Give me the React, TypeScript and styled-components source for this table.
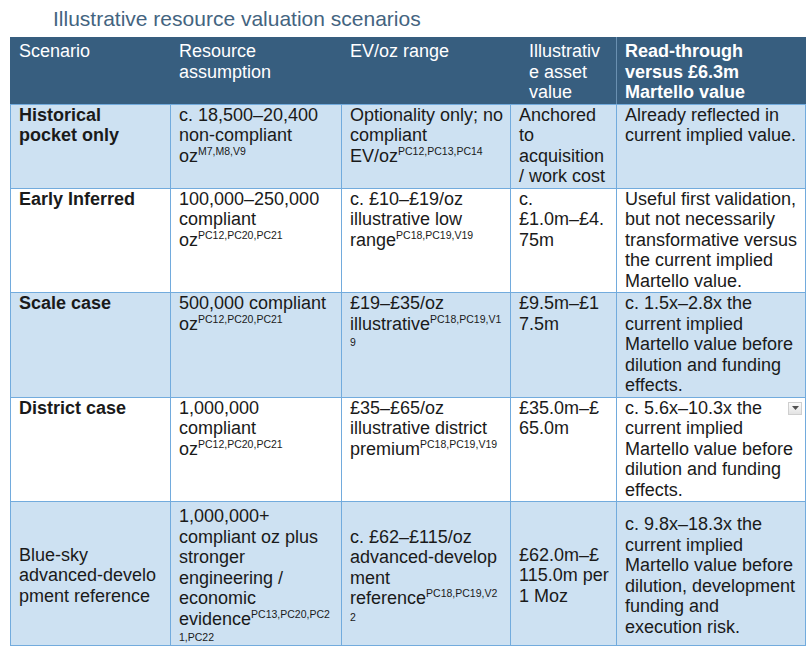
import React from "react";
import styled, { createGlobalStyle } from "styled-components";

type Piece = string | [string, string] | { sup: string };

type CellData = {
  lines: Piece[];
  bold?: boolean;
  menu?: boolean;
};

type RowData = {
  shaded?: boolean;
  middle?: boolean;
  cells: CellData[];
};

const GlobalStyle = createGlobalStyle`
  html, body {
    margin: 0;
    padding: 0;
    background: #ffffff;
  }
  body {
    font-family: "Liberation Sans", Arial, sans-serif;
  }
`;

const Page = styled.div`
  width: 810px;
  height: 647px;
  box-sizing: border-box;
  padding: 7px 0 0 10px;
  overflow: hidden;
`;

const Title = styled.h1`
  margin: 0 0 6px 43px;
  font-size: 21px;
  font-weight: 400;
  line-height: 24px;
  color: #44647f;
`;

const Table = styled.table`
  width: 795px;
  table-layout: fixed;
  border-collapse: collapse;
  font-size: 18px;
  line-height: 20.5px;
  color: #1a1a1a;
`;

const HeadCell = styled.th<{ $bold?: boolean; $indent?: boolean; $divided?: boolean }>`
  padding: 3px 8px 1px ${({ $indent }) => ($indent ? "18px" : "8px")};
  background: #375e7f;
  border: 1px solid #375e7f;
  border-bottom-color: #72abdd;
  border-right-color: ${({ $divided }) => ($divided ? "#6a90b1" : "#375e7f")};
  color: #ffffff;
  text-align: left;
  vertical-align: top;
  font-weight: ${({ $bold }) => ($bold ? 700 : 400)};
`;

const Row = styled.tr<{ $shaded?: boolean; $middle?: boolean }>`
  background: ${({ $shaded }) => ($shaded ? "#cde1f2" : "#ffffff")};
  vertical-align: ${({ $middle }) => ($middle ? "middle" : "top")};

  & > td {
    padding-top: ${({ $middle }) => ($middle ? "4px" : "0")};
    padding-bottom: ${({ $middle }) => ($middle ? "0" : "1px")};
  }
`;

const Cell = styled.td<{ $bold?: boolean }>`
  position: relative;
  padding: 0 8px 1px;
  border: 1px solid #72abdd;
  font-weight: ${({ $bold }) => ($bold ? 700 : 400)};
`;

const Line = styled.span`
  display: block;
  white-space: nowrap;
`;

const Sup = styled.sup`
  font-size: 10.5px;
  line-height: 0;
  vertical-align: super;
  font-weight: 400;
`;

const SupLine = styled.span`
  display: block;
  white-space: nowrap;
  font-size: 10.5px;
  line-height: 16px;
`;

const DropButton = styled.span`
  position: absolute;
  top: 4px;
  right: 3px;
  width: 14px;
  height: 13px;
  box-sizing: border-box;
  display: flex;
  align-items: center;
  justify-content: center;
  border: 1px solid #cfcfcf;
  background: linear-gradient(#fbfbfb, #e3e3e3);
`;

const header: CellData[] = [
  { lines: ["Scenario"] },
  { lines: ["Resource", "assumption"] },
  { lines: ["EV/oz range"] },
  { lines: ["Illustrativ", "e asset", "value"] },
  { lines: ["Read-through", "versus £6.3m", "Martello value"], bold: true },
];

const rows: RowData[] = [
  {
    shaded: true,
    cells: [
      { lines: ["Historical", "pocket only"], bold: true },
      { lines: ["c. 18,500–20,400", "non-compliant", ["oz", "M7,M8,V9"]] },
      { lines: ["Optionality only; no", "compliant", ["EV/oz", "PC12,PC13,PC14"]] },
      { lines: ["Anchored", "to", "acquisition", "/ work cost"] },
      { lines: ["Already reflected in", "current implied value."] },
    ],
  },
  {
    cells: [
      { lines: ["Early Inferred"], bold: true },
      { lines: ["100,000–250,000", "compliant", ["oz", "PC12,PC20,PC21"]] },
      { lines: ["c. £10–£19/oz", "illustrative low", ["range", "PC18,PC19,V19"]] },
      { lines: ["c.", "£1.0m–£4.", "75m"] },
      {
        lines: [
          "Useful first validation,",
          "but not necessarily",
          "transformative versus",
          "the current implied",
          "Martello value.",
        ],
      },
    ],
  },
  {
    shaded: true,
    cells: [
      { lines: ["Scale case"], bold: true },
      { lines: ["500,000 compliant", ["oz", "PC12,PC20,PC21"]] },
      { lines: ["£19–£35/oz", ["illustrative", "PC18,PC19,V1"], { sup: "9" }] },
      { lines: ["£9.5m–£1", "7.5m"] },
      {
        lines: [
          "c. 1.5x–2.8x the",
          "current implied",
          "Martello value before",
          "dilution and funding",
          "effects.",
        ],
      },
    ],
  },
  {
    cells: [
      { lines: ["District case"], bold: true },
      { lines: ["1,000,000", "compliant", ["oz", "PC12,PC20,PC21"]] },
      { lines: ["£35–£65/oz", "illustrative district", ["premium", "PC18,PC19,V19"]] },
      { lines: ["£35.0m–£", "65.0m"] },
      {
        lines: [
          "c. 5.6x–10.3x the",
          "current implied",
          "Martello value before",
          "dilution and funding",
          "effects.",
        ],
        menu: true,
      },
    ],
  },
  {
    shaded: true,
    middle: true,
    cells: [
      { lines: ["Blue-sky", "advanced-develo", "pment reference"] },
      {
        lines: [
          "1,000,000+",
          "compliant oz plus",
          "stronger",
          "engineering /",
          "economic",
          ["evidence", "PC13,PC20,PC2"],
          { sup: "1,PC22" },
        ],
      },
      {
        lines: [
          "c. £62–£115/oz",
          "advanced-develop",
          "ment",
          ["reference", "PC18,PC19,V2"],
          { sup: "2" },
        ],
      },
      { lines: ["£62.0m–£", "115.0m per", "1 Moz"] },
      {
        lines: [
          "c. 9.8x–18.3x the",
          "current implied",
          "Martello value before",
          "dilution, development",
          "funding and",
          "execution risk.",
        ],
      },
    ],
  },
];

const renderLines = (lines: Piece[]) =>
  lines.map((p, i) => {
    if (typeof p === "string") return <Line key={i}>{p}</Line>;
    if (Array.isArray(p))
      return (
        <Line key={i}>
          {p[0]}
          <Sup>{p[1]}</Sup>
        </Line>
      );
    return <SupLine key={i}>{p.sup}</SupLine>;
  });

const widths = [160, 171, 169, 106, 189];

const App: React.FC = () => {
  return (
    <>
      <GlobalStyle />
      <Page>
        <Title>Illustrative resource valuation scenarios</Title>
        <Table>
          <colgroup>
            {widths.map((w, i) => (
              <col key={i} style={{ width: w }} />
            ))}
          </colgroup>
          <thead>
            <tr>
              {header.map((c, i) => (
                <HeadCell key={i} $bold={c.bold} $indent={i === 3} $divided={i === 3}>
                  {renderLines(c.lines)}
                </HeadCell>
              ))}
            </tr>
          </thead>
          <tbody>
            {rows.map((r, ri) => (
              <Row key={ri} $shaded={r.shaded} $middle={r.middle}>
                {r.cells.map((c, ci) => (
                  <Cell key={ci} $bold={c.bold}>
                    {renderLines(c.lines)}
                    {c.menu && (
                      <DropButton>
                        <svg width="7" height="4" viewBox="0 0 7 4">
                          <path d="M0 0h7L3.5 4z" fill="#505050" />
                        </svg>
                      </DropButton>
                    )}
                  </Cell>
                ))}
              </Row>
            ))}
          </tbody>
        </Table>
      </Page>
    </>
  );
};

export default App;
